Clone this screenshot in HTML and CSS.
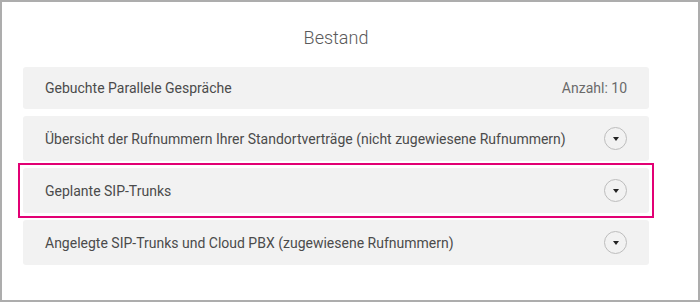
FILE: index.html
```html
<!DOCTYPE html>
<html lang="de">
  <head>
    <meta charset="UTF-8" />
    <meta name="viewport" content="width=device-width, initial-scale=1.0" />
    <title>Bestand</title>
    <link rel="stylesheet" href="styles.css">
  </head>
  <body>
    <div class="frame">
      <h1>Bestand</h1>
      <div class="list">
        <div class="row">
          <span>Gebuchte Parallele Gespräche</span>
          <span class="count">Anzahl: 10</span>
        </div>
        <div class="row">
          <span>Übersicht der Rufnummern Ihrer Standortverträge (nicht zugewiesene Rufnummern)</span>
          <span class="toggle"></span>
        </div>
        <div class="row active">
          <span>Geplante SIP-Trunks</span>
          <span class="toggle"></span>
        </div>
        <div class="row">
          <span>Angelegte SIP-Trunks und Cloud PBX (zugewiesene Rufnummern)</span>
          <span class="toggle"></span>
        </div>
      </div>
    </div>
  </body>
</html>
```

FILE: styles.css
```css
body {
  margin: 0;
  font-family: Roboto, "Liberation Sans", sans-serif;
  background-color: #fff;
}
.frame {
  width: 700px;
  height: 302px;
  box-sizing: border-box;
  border: 2px solid #adadad;
  padding: 25px 49px 0 21px;
}
h1 {
  margin: 0 0 18px;
  text-align: center;
  font-size: 18px;
  font-weight: 300;
  color: #5a5a5a;
  line-height: 22px;
}
.list {
  display: flex;
  flex-direction: column;
  gap: 7px;
}
.row {
  display: flex;
  justify-content: space-between;
  align-items: center;
  height: 45px;
  padding: 0 22px;
  background-color: #f2f2f2;
  border-radius: 3px;
  font-size: 14px;
  color: #4b4b4b;
}
.row:first-child {
  height: 42px;
}
.count {
  color: #6a6a6a;
}
.active {
  position: relative;
}
.active::before {
  content: "";
  position: absolute;
  top: -5px;
  left: -5px;
  right: -5px;
  bottom: -5px;
  border: 2px solid #e20074;
}
.toggle {
  width: 21px;
  height: 21px;
  border: 1px solid #bdbdbd;
  border-radius: 50%;
  position: relative;
}
.toggle::after {
  content: "";
  position: absolute;
  left: 8px;
  top: 9px;
  border-left: 3px solid transparent;
  border-right: 3px solid transparent;
  border-top: 4px solid #222;
}
```
